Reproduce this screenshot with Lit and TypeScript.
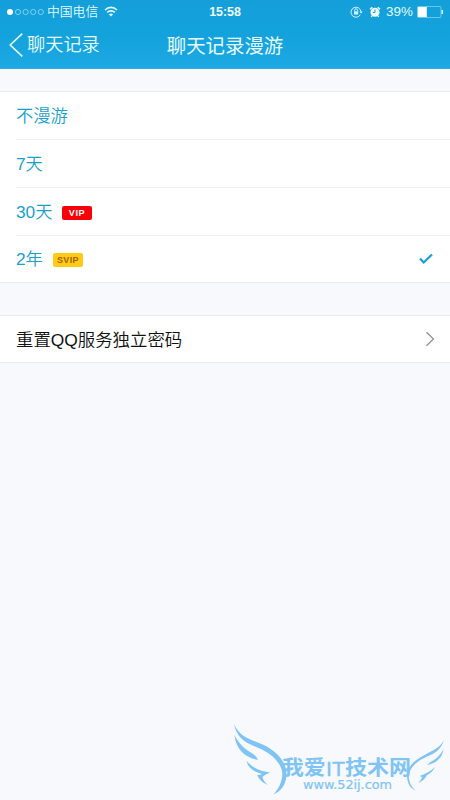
import { LitElement, html, css, nothing } from "lit";
import { customElement } from "lit/decorators.js";

interface Option {
  label: string;
  badge?: string;
  kind?: string;
  selected?: boolean;
}

const options: Option[] = [
  { label: "不漫游" },
  { label: "7天" },
  { label: "30天", badge: "VIP", kind: "vip" },
  { label: "2年", badge: "SVIP", kind: "svip", selected: true },
];

@customElement("status-bar")
class StatusBar extends LitElement {
  static styles = css`
    :host { display: grid; grid-template-columns: 1fr auto 1fr; height: 22px; align-items: center; color: #e2faff; font-size: 12px; line-height: 22px; }
    .side { display: flex; align-items: center; }
    .dots { margin-left: 6px; width: 40px; height: 10px; }
    .carrier { font-size: 12.8px; margin-left: 1px; font-weight: 350; }
    .wifi { margin-left: 6px; }
    .time { font-weight: 700; font-size: 12.4px; color: #effdff; padding-top: 1px; }
    .right { justify-content: flex-end; padding-right: 6px; }
    .clock { margin: 0 5px 0 6px; }
    .percent { font-size: 13.4px; letter-spacing: 0.1px; margin-right: 4px; padding-top: 1px; }
    svg { display: block; flex: none; }
  `;

  render() {
    return html`
      <div class="side">
        <svg class="dots" viewBox="0 0 40 10" fill="none" stroke="#8edcf5" stroke-width=".8">
          <circle cx="4" cy="5" r="3" fill="#fff" stroke="none" />
          <circle cx="12" cy="5" r="2.6" /><circle cx="19.6" cy="5" r="2.6" />
          <circle cx="27.2" cy="5" r="2.6" /><circle cx="34.8" cy="5" r="2.6" />
        </svg>
        <span class="carrier">中国电信</span>
        <svg class="wifi" width="14" height="11" viewBox="0 0 14 11" fill="none" stroke="#e2faff" stroke-width="1.7">
          <path d="M1 4C4.5.6 9.500.6 13 4M3.200 6.400C5.300 4.300 8.700 4.300 10.800 6.400" />
          <path d="M7 10.600 4.900 8.400Q7 6.700 9.100 8.400Z" fill="#e2faff" stroke="none" />
        </svg>
      </div>
      <span class="time">15:58</span>
      <div class="side right">
        <svg width="13" height="12" viewBox="0 0 13 12" fill="none" stroke="#d4f5ff" stroke-width="1">
          <path d="M10.300 8.800A5 5 0 1 1 11 5.800" />
          <path d="M9.300 5.600H12.700L11 7.600Z" fill="#d4f5ff" stroke="none" />
          <path d="M4.600 5.500V4.300a1.500 1.500 0 0 1 3 0V5.500" />
          <rect x="4" y="5.300" width="4.200" height="3.200" fill="#d4f5ff" stroke="none" />
        </svg>
        <svg class="clock" width="12" height="12" viewBox="0 0 12 12">
          <path d="M1 3.300 3.300 1.200M8.700 1.200 11 3.300M3.200 9.500 2.300 11M8.800 9.500 9.700 11" stroke="#effdff" stroke-width="1.400" />
          <circle cx="6" cy="6.300" r="4.500" fill="#effdff" />
          <path d="M6 3.500V6.500H3.800" fill="none" stroke="#159fd8" stroke-width="1" />
        </svg>
        <span class="percent">39%</span>
        <svg width="27" height="12" viewBox="0 0 27 12">
          <rect x=".5" y=".5" width="23.500" height="11" rx="1" fill="none" stroke="#7fd3ef" stroke-width=".8" />
          <rect x=".8" y="1" width="9" height="10" fill="#fff" />
          <path d="M25 4q1.500 2 0 4z" fill="#d4f5ff" stroke="#d4f5ff" />
        </svg>
      </div>
    `;
  }
}

@customElement("brand-mark")
class BrandMark extends LitElement {
  static styles = css`
    :host { display: block; }
    svg { display: block; }
    .name { font: 700 20px "Noto Sans CJK SC", sans-serif; }
    .latin { font: 400 21px "Liberation Sans", sans-serif; stroke: #80c4f5; stroke-width: .4; }
    .site { font: 400 12px "DejaVu Sans", sans-serif; stroke: #80c4f5; stroke-width: .2; }
  `;

  render() {
    return html`
      <svg width="220" height="80" viewBox="230 720 220 80" fill="#80c4f5">
        <path d="M234 724C239 736 249 739 259 743C275 749 287 761 286.500 775C286 785 281 791 273.500 794.500C280 787 284 778 281.500 769C277 757 266 751 254 746C243 742 236 735 234 724Z" />
        <path d="M234.500 735C239 744 245 749 250 752Q256 755 258 760C247 758 236 751 234.500 735Z" />
        <path d="M246.500 761Q251 766 257 769Q263 772 270 772.500Q264 775 262.500 777Q263 781 268 785Q260 782 257 775Q261 775 262 774C254 772 248 768 246.500 761Z" />
        <path d="M444 740C441 750 434 754 426 757C413 763 408 771 409 779Q410 786 415.500 790.500C409 788 406 780 407.500 773C409 763 419 758 428 753C436 749 441 746 444 740Z" />
        <path d="M443.500 749C442 759 436 763 427 765Q430 762 434 760Q440 756 443.500 749Z" />
        <path d="M435 767Q432 773 427 775Q424 781 418 783Q422 779 422 777L419.500 776Q429 773 435 767Z" />
        <text class="name" x="282" y="774.500" textLength="43.500" lengthAdjust="spacingAndGlyphs">我爱</text>
        <text class="latin" x="326" y="776" textLength="19" lengthAdjust="spacingAndGlyphs">IT</text>
        <text class="name" x="345" y="774.500" textLength="66" lengthAdjust="spacingAndGlyphs">技术网</text>
        <text class="site" x="303" y="789" textLength="89" lengthAdjust="spacingAndGlyphs">www.52ij.com</text>
      </svg>
    `;
  }
}

@customElement("app-root")
class AppRoot extends LitElement {
  static styles = css`
    :host { display: flex; flex-direction: column; position: relative; height: 800px; overflow: hidden; background: #f7f9fc; font-family: "Liberation Sans", "Noto Sans CJK SC", sans-serif; }
    .header { height: 69px; box-sizing: border-box; background: linear-gradient(#149fd9, #14a2dc 50%, #1da9e3); border-bottom: 1px solid #33aedb; flex: none; }
    .nav { display: grid; grid-template-columns: 1fr auto 1fr; height: 46px; align-items: center; color: #e6fbff; }
    .back { display: flex; align-items: center; font-size: 18.200px; font-weight: 350; padding-left: 9px; gap: 4px; line-height: 26px; }
    .title { font-size: 19.400px; font-weight: 400; line-height: 28px; padding-top: 2px; }
    .group { background: #fff; border-top: 1px solid #e9ebed; border-bottom: 1px solid #e9ebed; }
    .options { margin-top: 22px; padding-left: 16px; }
    .row { display: flex; align-items: center; height: 47px; border-bottom: 1px solid #edf0f1; font-size: 17.300px; line-height: 26px; color: #1b9fcb; font-weight: 350; }
    .row:last-child { height: 46px; border-bottom: 0; }
    .badge { display: flex; align-items: center; justify-content: center; width: 30px; height: 14px; border-radius: 2px; margin: 3px 0 0 9.500px; font: 700 9px/14px "Liberation Sans", sans-serif; letter-spacing: .7px; }
    .vip { background: #f90009; color: #fff; }
    .svip { background: #ffcc13; color: #a86100; letter-spacing: .3px; margin: 2px 0 0 10px; }
    .check { margin: 0 17px 0 auto; }
    .reset { display: flex; align-items: center; justify-content: space-between; margin-top: 32px; height: 46px; padding: 0 15px 0 16px; font-size: 17.400px; font-weight: 350; color: #111; }
    .reset span { margin-top: -2px; }
    .brand { position: absolute; left: 230px; top: 720px; }
    svg { display: block; }
  `;

  render() {
    return html`
      <header class="header">
        <status-bar></status-bar>
        <div class="nav">
          <div class="back">
            <svg width="14" height="24" viewBox="0 0 14 24" fill="none" stroke="#e6fbff" stroke-width="1.600"><path d="M13.300.7 1.200 12 13.300 23.300" /></svg>
            <span>聊天记录</span>
          </div>
          <div class="title">聊天记录漫游</div>
        </div>
      </header>
      <section class="group options">
        ${options.map(
          (o) => html`<div class="row">
            <span>${o.label}</span>
            ${o.badge ? html`<span class="badge ${o.kind}">${o.badge}</span>` : nothing}
            ${o.selected
              ? html`<svg class="check" width="14" height="12" viewBox="0 0 14 12" fill="none" stroke="#199fd9" stroke-width="2.200"><path d="M1 5.500 4.700 9.500 13 1.500" /></svg>`
              : nothing}
          </div>`
        )}
      </section>
      <section class="group reset">
        <span>重置QQ服务独立密码</span>
        <svg width="10" height="16" viewBox="0 0 10 16" fill="none" stroke="#8d8d8d" stroke-width="1.200"><path d="M1.500 1.200 8.500 8 1.500 14.800" /></svg>
      </section>
      <brand-mark class="brand"></brand-mark>
    `;
  }
}
